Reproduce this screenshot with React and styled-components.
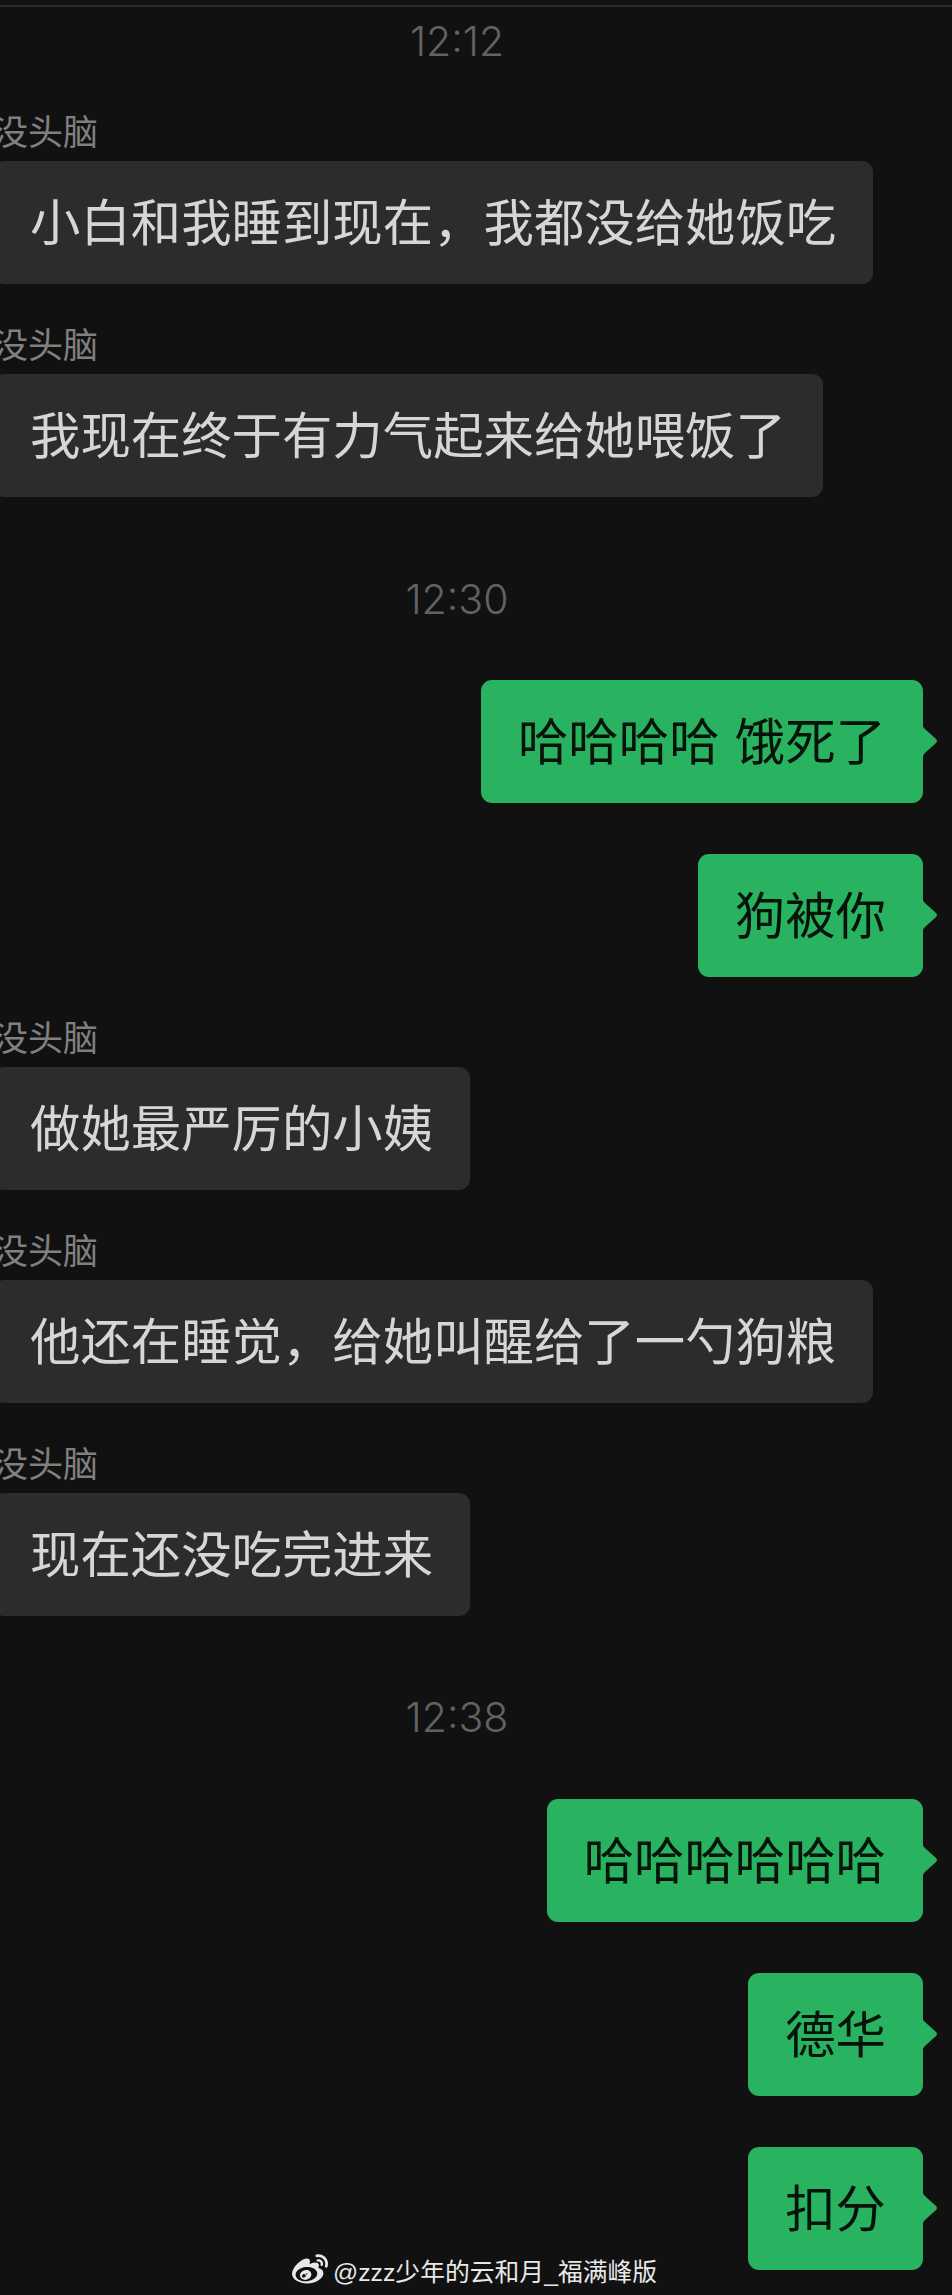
import React from "react";
import styled, { createGlobalStyle } from "styled-components";
import { FaWeibo } from "react-icons/fa";

const Global = createGlobalStyle`
  html, body { margin: 0; padding: 0; background: #111111; }
  body { width: 952px; height: 2295px; overflow: hidden; }
`;

const CJK = `"Noto Sans CJK SC", "Noto Sans", sans-serif`;

const Screen = styled.main`
  position: relative;
  width: 952px;
  height: 2295px;
  overflow: hidden;
  background: #111111;
  font-family: ${CJK};
`;

const TopRule = styled.div`
  height: 2px;
  margin-top: 5px;
  background: #2a2a2a;
`;

const Thread = styled.div`
  display: flex;
  flex-direction: column;
`;

const TimeLabel = styled.div`
  height: 50px;
  margin-top: ${(p) => p.$top}px;
  padding-right: 38px;
  display: flex;
  align-items: center;
  justify-content: center;
  font-family: Inter, sans-serif;
  font-size: 41px;
  font-weight: 300;
  color: #626262;
`;

const Incoming = styled.div`
  display: flex;
  flex-direction: column;
  align-items: flex-start;
  margin-top: ${(p) => p.$top}px;
  margin-left: -7px;
`;

const Name = styled.div`
  height: 34px;
  line-height: 30px;
  margin-bottom: 12px;
  font-size: 35px;
  font-weight: 400;
  color: #808080;
  white-space: nowrap;
`;

const Bubble = styled.div`
  box-sizing: border-box;
  height: 123px;
  padding: 0 37px 6px;
  display: flex;
  align-items: center;
  border-radius: 11px;
  font-size: 50.4px;
  font-weight: 400;
  word-spacing: 4px;
  white-space: pre;
`;

const GrayBubble = styled(Bubble)`
  background: #2c2c2c;
  color: #d6d6d6;
`;

const GreenRow = styled.div`
  display: flex;
  justify-content: flex-end;
  margin-top: ${(p) => p.$top}px;
  padding-right: 29px;
`;

const GreenBubble = styled(Bubble)`
  position: relative;
  background: #29b360;
  color: #06130b;
`;

const Tail = styled.svg`
  position: absolute;
  left: 100%;
  top: 44px;
  width: 16px;
  height: 34px;
  margin-left: -1px;
`;

const Watermark = styled.div`
  position: absolute;
  left: 292px;
  top: 2254px;
  display: flex;
  align-items: center;
  gap: 5px;
  height: 32px;
  font-size: 24.8px;
  font-weight: 400;
  color: #e8e8e8;
  white-space: nowrap;
`;

const Handle = styled.span`
  font-family: "Liberation Sans", ${CJK};
`;

function Sent({ top, children }) {
  return (
    <GreenRow $top={top}>
      <GreenBubble>
        {children}
        <Tail viewBox="0 0 16 34" aria-hidden="true">
          <path d="M0 0 C1 3 2 4 4 6 L13.5 14.5 C15.5 16.2 15.5 17.8 13.5 19.5 L4 28 C2 30 1 31 0 34 Z" fill="#29b360" />
        </Tail>
      </GreenBubble>
    </GreenRow>
  );
}

function Received({ top, children }) {
  return (
    <Incoming $top={top}>
      <Name>没头脑</Name>
      <GrayBubble>{children}</GrayBubble>
    </Incoming>
  );
}

export default function App() {
  return (
    <Screen>
      <Global />
      <TopRule />
      <Thread>
        <TimeLabel $top={9}>12:12</TimeLabel>
        <Received top={49}>{"小白和我睡到现在\uFF0C我都没给她饭吃"}</Received>
        <Received top={44}>我现在终于有力气起来给她喂饭了</Received>
        <TimeLabel $top={77}>12:30</TimeLabel>
        <Sent top={56}>哈哈哈哈 饿死了</Sent>
        <Sent top={51}>狗被你</Sent>
        <Received top={44}>做她最严厉的小姨</Received>
        <Received top={44}>{"他还在睡觉\uFF0C给她叫醒给了一勺狗粮"}</Received>
        <Received top={44}>现在还没吃完进来</Received>
        <TimeLabel $top={76}>12:38</TimeLabel>
        <Sent top={57}>哈哈哈哈哈哈</Sent>
        <Sent top={51}>德华</Sent>
        <Sent top={51}>扣分</Sent>
      </Thread>
      <Watermark>
        <FaWeibo size={36} />
        <Handle>@zzz少年的云和月_福满峰版</Handle>
      </Watermark>
    </Screen>
  );
}
